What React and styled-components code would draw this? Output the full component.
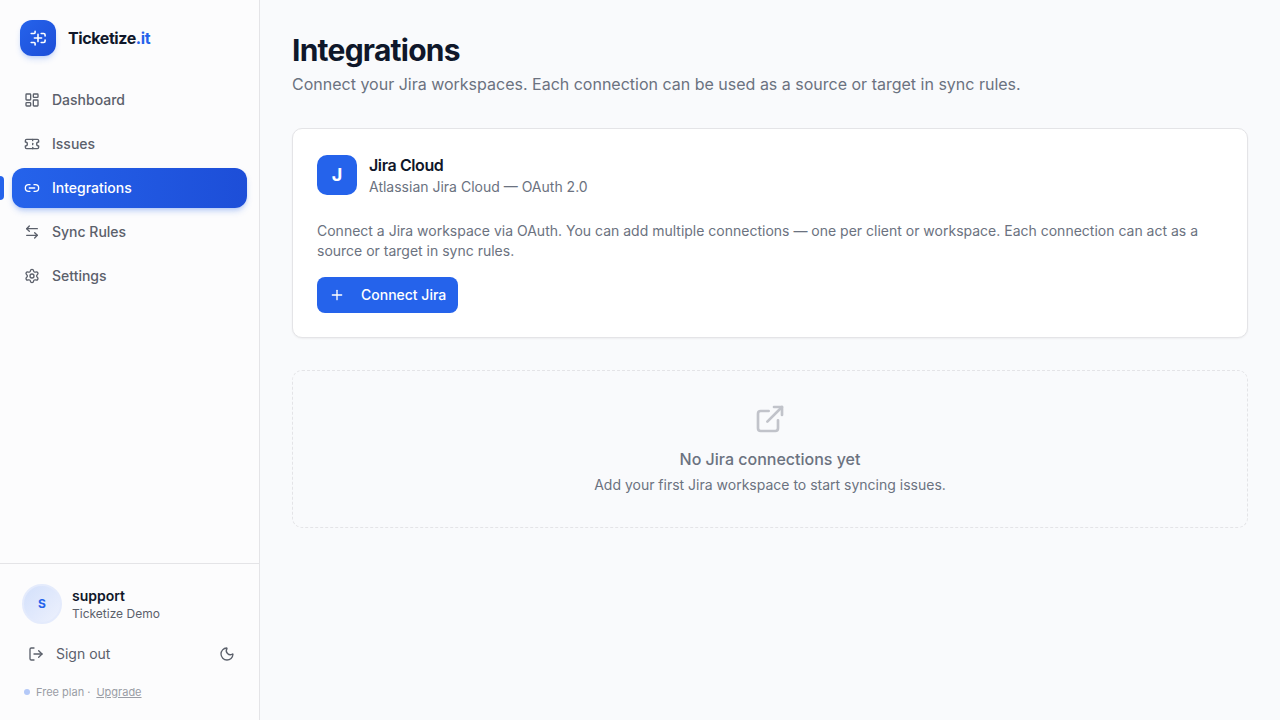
import styled, { createGlobalStyle, css } from 'styled-components'
import {
  LayoutDashboard,
  Ticket,
  Link2,
  ArrowLeftRight,
  Settings,
  LogOut,
  Moon,
  Plus,
  ExternalLink,
} from 'lucide-react'

const navItems = [
  { label: 'Dashboard', Icon: LayoutDashboard },
  { label: 'Issues', Icon: Ticket },
  { label: 'Integrations', Icon: Link2, active: true },
  { label: 'Sync Rules', Icon: ArrowLeftRight },
  { label: 'Settings', Icon: Settings },
]

const LogoMark = () => (
  <svg width="20" height="20" viewBox="0 0 20 20" fill="none" stroke="#fff" strokeWidth="1.6" strokeLinecap="round" strokeLinejoin="round">
    <path d="M3.2 5.5h3q.9 0 .9-.9V3.4" />
    <path d="M3.2 14.5h3q.9 0 .9 .9v1.5" />
    <path d="M13.2 5.5h2.4q1.5 0 1.5 1.5v.9" />
    <path d="M13.2 14.5h2.4q1.5 0 1.5-1.5v-.9" />
    <path d="M10 6.4v7.2M6.4 10h7.2" />
  </svg>
)

const App = () => {
  return (
    <>
      <GlobalStyle />
      <Layout>
        <Sidebar>
          <Brand>
            <BrandIcon><LogoMark /></BrandIcon>
            <BrandName>Ticketize<span>.it</span></BrandName>
          </Brand>

          <Nav>
            {navItems.map(({ label, Icon, active }) => (
              <NavItem key={label} href="#" $active={active}>
                <Icon size={16} />
                {label}
              </NavItem>
            ))}
          </Nav>

          <SidebarFooter>
            <User>
              <Avatar>S</Avatar>
              <div>
                <UserName>support</UserName>
                <UserOrg>Ticketize Demo</UserOrg>
              </div>
            </User>
            <FooterActions>
              <SignOut><LogOut size={16} />Sign out</SignOut>
              <ThemeToggle aria-label="Toggle theme"><Moon size={16} /></ThemeToggle>
            </FooterActions>
            <Plan>
              <PlanDot />
              <span>Free plan ·</span>
              <a href="#">Upgrade</a>
            </Plan>
          </SidebarFooter>
        </Sidebar>

        <Main>
          <Title>Integrations</Title>
          <Subtitle>Connect your Jira workspaces. Each connection can be used as a source or target in sync rules.</Subtitle>

          <Card>
            <CardHeader>
              <JiraIcon>J</JiraIcon>
              <div>
                <CardTitle>Jira Cloud</CardTitle>
                <CardMeta>Atlassian Jira Cloud — OAuth 2.0</CardMeta>
              </div>
            </CardHeader>
            <CardText>
              Connect a Jira workspace via OAuth. You can add multiple connections — one per client or workspace. Each connection can act as a source or target in sync rules.
            </CardText>
            <ConnectButton><Plus size={16} />Connect Jira</ConnectButton>
          </Card>

          <EmptyState>
            <ExternalLink size={32} />
            <EmptyTitle>No Jira connections yet</EmptyTitle>
            <EmptyText>Add your first Jira workspace to start syncing issues.</EmptyText>
          </EmptyState>
        </Main>
      </Layout>
    </>
  )
}

const GlobalStyle = createGlobalStyle`
  *{
    box-sizing:border-box;
    margin:0;
    padding:0;
  }
  body{
    background:#f9fafc;
    color:#0f172a;
    font-family:Inter, sans-serif;
    font-size:14px;
    line-height:20px;
  }
  button{
    border:0;
    background:none;
    font:inherit;
    cursor:pointer;
  }
  svg{
    flex-shrink:0;
  }
`
const Layout = styled.div`
  display:flex;
  min-height:100vh;
`
const Sidebar = styled.aside`
  display:flex;
  flex-direction:column;
  width:260px;
  flex-shrink:0;
  background:#fcfcfd;
  border-right:1px solid #e4e4e7;
`
const Brand = styled.div`
  display:flex;
  align-items:center;
  gap:12px;
  padding:20px 20px 12px;
`
const BrandIcon = styled.div`
  display:flex;
  align-items:center;
  justify-content:center;
  width:36px;
  height:36px;
  border-radius:12px;
  background:linear-gradient(135deg, #2563eb, #1d4ed8);
  box-shadow:0 4px 6px -1px rgba(37,99,235,.2), 0 2px 4px -2px rgba(37,99,235,.2);
`
const BrandName = styled.div`
  font-size:16px;
  line-height:24px;
  font-weight:700;
  letter-spacing:-.4px;
  span{
    color:#2563eb;
  }
`
const Nav = styled.nav`
  display:flex;
  flex-direction:column;
  gap:4px;
  flex:1;
  padding:12px;
`
const NavItem = styled.a`
  position:relative;
  display:flex;
  align-items:center;
  gap:12px;
  height:40px;
  padding:0 12px;
  border-radius:12px;
  color:#5b606b;
  font-weight:500;
  text-decoration:none;

  ${({ $active }) => $active && css`
    color:#fff;
    background:linear-gradient(90deg, #2563eb, #1d4ed8);
    box-shadow:0 4px 6px -1px rgba(37,99,235,.25), 0 2px 4px -2px rgba(37,99,235,.25);
    /* marker on the window edge */
    &::before{
      content:'';
      position:absolute;
      left:-12px;
      top:8px;
      width:4px;
      height:24px;
      border-radius:0 4px 4px 0;
      background:#2563eb;
    }
  `}
`
const SidebarFooter = styled.div`
  height:157px;
  padding:20px 12px 0;
  border-top:1px solid #e4e4e7;
`
const User = styled.div`
  display:flex;
  align-items:center;
  gap:10px;
  padding-left:10px;
`
const Avatar = styled.div`
  display:flex;
  align-items:center;
  justify-content:center;
  width:40px;
  height:40px;
  border-radius:50%;
  border:2px solid #e4ebfc;
  background:linear-gradient(135deg, #d3e0fb, #edf1fd);
  color:#2563eb;
  font-size:12px;
  font-weight:700;
`
const UserName = styled.div`
  font-weight:600;
  line-height:20px;
`
const UserOrg = styled.div`
  color:#5b606b;
  font-size:12px;
  line-height:16px;
`
const FooterActions = styled.div`
  display:flex;
  align-items:center;
  justify-content:space-between;
  margin-top:12px;
  padding:0 4px;
`
const SignOut = styled.button`
  display:flex;
  align-items:center;
  gap:12px;
  height:36px;
  padding:0 12px;
  color:#5b606b;
`
const ThemeToggle = styled.button`
  display:flex;
  align-items:center;
  justify-content:center;
  width:32px;
  height:32px;
  color:#5b606b;
`
const Plan = styled.div`
  display:flex;
  align-items:center;
  gap:6px;
  margin-top:12px;
  padding-left:12px;
  color:#9a9da5;
  font-size:11px;
  line-height:16px;
  a{
    color:inherit;
  }
`
const PlanDot = styled.i`
  width:6px;
  height:6px;
  border-radius:50%;
  background:#b4c9f8;
`
const Main = styled.main`
  flex:1;
  padding:32px;
`
const Title = styled.h1`
  font-size:30px;
  line-height:36px;
  font-weight:700;
  letter-spacing:-.75px;
`
const Subtitle = styled.p`
  margin-top:4px;
  color:#6b7280;
  font-size:16px;
  line-height:24px;
`
const Card = styled.section`
  margin-top:32px;
  height:210px;
  padding:24px;
  background:#fff;
  border:1px solid #e4e4e7;
  border-radius:10px;
  box-shadow:0 1px 2px rgba(0,0,0,.05);
`
const CardHeader = styled.div`
  display:flex;
  align-items:center;
  gap:12px;
`
const JiraIcon = styled.div`
  display:flex;
  align-items:center;
  justify-content:center;
  width:40px;
  height:40px;
  border-radius:10px;
  background:#2563eb;
  color:#fff;
  font-size:18px;
  font-weight:700;
`
const CardTitle = styled.h2`
  font-size:16px;
  line-height:24px;
  font-weight:600;
  letter-spacing:-.4px;
`
const CardMeta = styled.p`
  color:#6b7280;
`
const CardText = styled.p`
  margin:24px 0 16px;
  color:#6b7280;
`
const ConnectButton = styled.button`
  display:flex;
  align-items:center;
  gap:16px;
  height:36px;
  padding:0 12px;
  border-radius:8px;
  background:#2563eb;
  color:#fff;
  font-weight:500;
`
const EmptyState = styled.section`
  display:flex;
  flex-direction:column;
  align-items:center;
  height:158px;
  margin-top:32px;
  padding-top:32px;
  border:1px dashed #e4e4e7;
  border-radius:10px;
  color:#6b7280;
  svg{
    color:#c1c3ca;
  }
`
const EmptyTitle = styled.p`
  margin-top:12px;
  font-size:16px;
  line-height:24px;
  font-weight:500;
`
const EmptyText = styled.p`
  margin-top:4px;
`

export default App
